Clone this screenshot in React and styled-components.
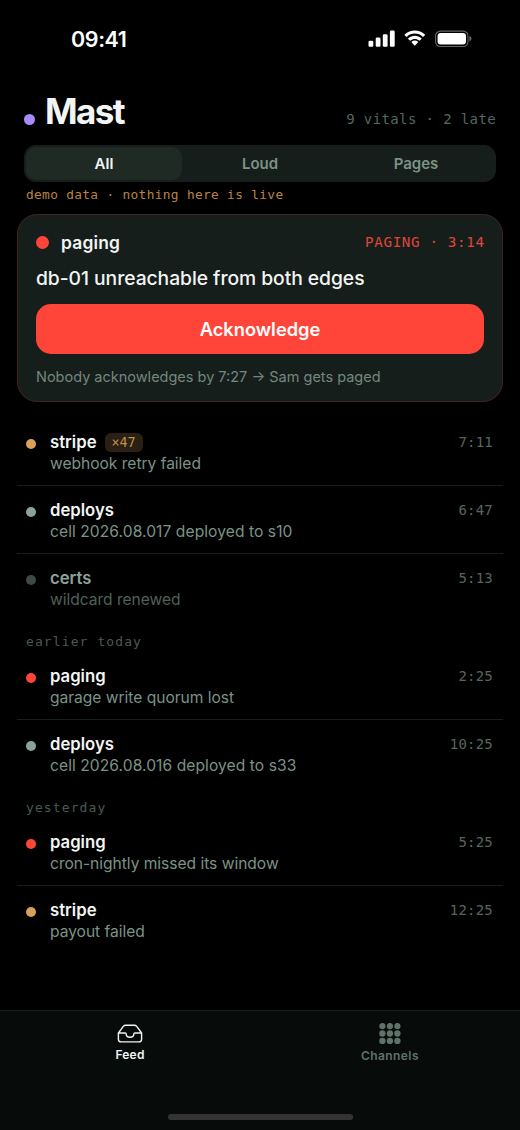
import React, { useState } from "react";
import styled, { createGlobalStyle } from "styled-components";

const tabs = ["All", "Loud", "Pages"];

const sections = [
  {
    rows: [
      { name: "stripe", text: "webhook retry failed", time: "7:11", color: "#d9a05b", count: 47 },
      { name: "deploys", text: "cell 2026.08.017 deployed to s10", time: "6:47", color: "#8aa398", spacing: 0.07 },
      { name: "certs", text: "wildcard renewed", time: "5:13", color: "#3d4b45", quiet: true },
    ],
  },
  {
    label: "earlier today",
    rows: [
      { name: "paging", text: "garage write quorum lost", time: "2:25", color: "#ff453a" },
      { name: "deploys", text: "cell 2026.08.016 deployed to s33", time: "10:25", color: "#8aa398", spacing: 0.07 },
    ],
  },
  {
    label: "yesterday",
    rows: [
      { name: "paging", text: "cron-nightly missed its window", time: "5:25", color: "#ff453a" },
      { name: "stripe", text: "payout failed", time: "12:25", color: "#d9a05b" },
    ],
  },
];

const App = () => {
  const [tab, setTab] = useState("All");

  return (
    <>
      <GlobalStyle />
      <Screen>
        <StatusBar>
          <Clock>09:41</Clock>
          <StatusIcons />
        </StatusBar>
        <Header>
          <BrandDot />
          <h1>Mast</h1>
          <Vitals>9 vitals · 2 late</Vitals>
        </Header>
        <Segments>
          {tabs.map((item) => (
            <Segment key={item} $active={item === tab} onClick={() => setTab(item)}>
              {item}
            </Segment>
          ))}
        </Segments>
        <Demo>demo data · nothing here is live</Demo>
        <Card>
          <CardTop>
            <CardDot />
            <CardName>paging</CardName>
            <CardState>PAGING · 3:14</CardState>
          </CardTop>
          <CardTitle>db-01 unreachable from both edges</CardTitle>
          <AckButton>Acknowledge</AckButton>
          <CardNote>Nobody acknowledges by 7:27 → Sam gets paged</CardNote>
        </Card>
        <Feed>
          {sections.map((section, index) => (
            <section key={index}>
              {section.label && <SectionLabel>{section.label}</SectionLabel>}
              {section.rows.map((row) => (
                <Row key={row.name}>
                  <RowDot $color={row.color} />
                  <RowBody>
                    <RowName $quiet={row.quiet}>
                      <span>{row.name}</span>
                      {row.count && <Count>×{row.count}</Count>}
                    </RowName>
                    <RowText $quiet={row.quiet} $spacing={row.spacing}>
                      {row.text}
                    </RowText>
                  </RowBody>
                  <RowTime>{row.time}</RowTime>
                </Row>
              ))}
            </section>
          ))}
        </Feed>
        <TabBar>
          <Tabs>
            <Tab $active>
              <TrayIcon />
              <span>Feed</span>
            </Tab>
            <Tab>
              <GridIcon />
              <span>Channels</span>
            </Tab>
          </Tabs>
          <HomeIndicator />
        </TabBar>
      </Screen>
    </>
  );
};

const StatusIcons = () => (
  <svg width="104" height="18" viewBox="0 0 104 18" fill="#fff">
    <rect x="0.5" y="10.8" width="4.8" height="6" rx="1.3" />
    <rect x="7.7" y="7.6" width="4.8" height="9.2" rx="1.3" />
    <rect x="14.8" y="4.2" width="4.8" height="12.6" rx="1.3" />
    <rect x="21.9" y="0.6" width="4.8" height="16.2" rx="1.3" />
    <path d="M46.8 3.6c3 0 5.8 1.2 7.9 3.2.2.2.4.2.6 0l1.6-1.6c.2-.2.2-.5 0-.7-5.6-5.3-14.6-5.3-20.2 0-.2.2-.2.5 0 .7l1.6 1.6c.2.2.4.2.6 0 2.1-2 4.9-3.2 7.9-3.2z" />
    <path d="M46.8 8.9c1.7 0 3.2.6 4.4 1.7.2.2.4.2.6 0l1.6-1.6c.2-.2.2-.5 0-.7-3.7-3.5-9.5-3.5-13.2 0-.2.2-.2.5 0 .7l1.6 1.6c.2.2.4.2.6 0 1.2-1.1 2.8-1.7 4.4-1.7z" />
    <path d="M49.9 12.5c.2-.2.2-.5 0-.7-1.8-1.6-4.4-1.6-6.2 0-.2.2-.2.5 0 .7l2.8 2.9c.2.2.5.2.6 0z" />
    <rect x="67.6" y="1.1" width="32.4" height="15.4" rx="4.8" fill="none" stroke="#fff" strokeOpacity="0.4" strokeWidth="1.1" />
    <rect x="69.6" y="3.1" width="28.4" height="11.4" rx="3.2" />
    <path d="M101.5 6.1v5.4c1.1-.5 1.9-1.5 1.9-2.7s-.8-2.2-1.9-2.7z" fillOpacity="0.45" />
  </svg>
);

const TrayIcon = () => (
  <svg width="26" height="22" viewBox="0 0 26 22" fill="none" stroke="currentColor" strokeWidth="1.4" strokeLinejoin="round" strokeLinecap="round">
    <path d="M1.4 10 6.3 3.4c.7-.9 1.2-1.2 2.3-1.2h8.8c1.1 0 1.6.3 2.3 1.2l4.9 6.6v6.2c0 1.9-.8 2.7-2.7 2.7H4.1c-1.9 0-2.7-.8-2.7-2.7z" />
    <path d="M1.6 10h6.5c.7 0 1.1.4 1.1 1 0 1.8 1.7 3.2 3.8 3.2s3.8-1.4 3.8-3.2c0-.6.4-1 1.1-1h6.5" />
  </svg>
);

const GridIcon = () => (
  <svg width="22" height="22" viewBox="0 0 22 22" fill="currentColor">
    {[3.1, 10.5, 17.9].map((y) =>
      [3.4, 10.9, 18.4].map((x) => <circle key={`${x}-${y}`} cx={x} cy={y} r="3.15" />)
    )}
  </svg>
);

const GlobalStyle = createGlobalStyle`
  * {
    box-sizing: border-box;
  }
  body {
    margin: 0;
    background: #000;
    font-family: Inter, "Liberation Sans", sans-serif;
  }
  button {
    border: none;
    padding: 0;
    font-family: inherit;
    cursor: pointer;
  }
  h1, h2, p {
    margin: 0;
  }
`;

const Mono = styled.span`
  font-family: "DejaVu Sans Mono", monospace;
  white-space: pre;
`;

const Dot = styled.i`
  flex: none;
  border-radius: 50%;
`;

const Screen = styled.div`
  display: flex;
  flex-direction: column;
  width: 520px;
  height: 1130px;
  overflow: hidden;
  background: #000;
  color: #f2f5f3;
`;

const StatusBar = styled.div`
  display: flex;
  justify-content: space-between;
  align-items: center;
  height: 78px;
  padding: 0 48px 0 71px;
  color: #fff;
`;

const Clock = styled.span`
  font-size: 21.5px;
  font-weight: 600;
  letter-spacing: -0.4px;
`;

const Header = styled.header`
  display: flex;
  align-items: baseline;
  height: 67px;
  padding: 11px 24px 0;
  h1 {
    margin-left: 10px;
    font-size: 35px;
    line-height: 44px;
    font-weight: 700;
    letter-spacing: -1.6px;
  }
`;

const BrandDot = styled(Dot)`
  width: 11px;
  height: 11px;
  background: #a78bfa;
  transform: translateY(1px);
`;

const Vitals = styled(Mono)`
  margin-left: auto;
  font-size: 14px;
  letter-spacing: 0.38px;
  color: #55675f;
`;

const Segments = styled.div`
  display: grid;
  grid-template-columns: repeat(3, 1fr);
  height: 37px;
  margin: 0 24px;
  padding: 2px;
  border-radius: 12px;
  background: #161e1b;
`;

const Segment = styled.button`
  border-radius: 10px;
  background: ${({ $active }) => ($active ? "#1f2a25" : "transparent")};
  color: ${({ $active }) => ($active ? "#f2f5f3" : "#7b9287")};
  font-size: 15px;
  font-weight: 600;
`;

const Demo = styled(Mono)`
  height: 32px;
  padding: 4px 26px 0;
  font-size: 12.8px;
  letter-spacing: 0.34px;
  line-height: 18px;
  color: #b98443;
`;

const Card = styled.div`
  display: flex;
  flex-direction: column;
  height: 188px;
  margin: 0 17px;
  padding: 15px 18px 0;
  border: 1px solid #42231f;
  border-radius: 20px;
  background: #161e1b;
`;

const CardTop = styled.div`
  display: flex;
  align-items: center;
  height: 24px;
`;

const CardDot = styled(Dot)`
  width: 13px;
  height: 13px;
  background: #ff453a;
`;

const CardName = styled.span`
  margin-left: 12px;
  font-size: 17.4px;
  font-weight: 600;
  letter-spacing: 0.2px;
`;

const CardState = styled(Mono)`
  margin-left: auto;
  font-size: 14.2px;
  letter-spacing: 0.65px;
  margin-right: -0.6px;
  color: #e0443a;
`;

const CardTitle = styled.h2`
  margin-top: 11px;
  font-size: 19.3px;
  line-height: 26px;
  font-weight: 500;
  letter-spacing: -0.05px;
`;

const AckButton = styled.button`
  height: 50px;
  margin-top: 13px;
  padding-bottom: 1px;
  border-radius: 15px;
  background: #ff453a;
  color: #fff;
  font-size: 18.3px;
  font-weight: 600;
`;

const CardNote = styled.p`
  margin-top: 13px;
  font-size: 14.5px;
  line-height: 20px;
  color: #72877d;
`;

const Feed = styled.main`
  flex: 1;
  padding: 16px 17px 0;
`;

const SectionLabel = styled(Mono)`
  display: block;
  height: 30px;
  padding: 10px 9px 0;
  font-size: 13px;
  line-height: 20px;
  letter-spacing: 1.1px;
  color: #4a5a53;
`;

const Row = styled.div`
  display: flex;
  height: 68px;
  padding: 13px 10px 0 9px;
  &:not(:last-child) {
    border-bottom: 1px solid #161e1b;
  }
`;

const RowDot = styled(Dot)`
  width: 10px;
  height: 10px;
  margin-top: 8px;
  background: ${({ $color }) => $color};
`;

const RowBody = styled.div`
  flex: 1;
  margin-left: 14px;
`;

const RowName = styled.div`
  display: flex;
  align-items: center;
  gap: 8px;
  height: 22px;
  font-size: 16.7px;
  font-weight: 600;
  color: ${({ $quiet }) => ($quiet ? "#8aa398" : "#f2f5f3")};
`;

const Count = styled(Mono)`
  height: 19px;
  padding: 0 7px;
  border-radius: 6px;
  background: #2b2014;
  color: #c08e50;
  font-size: 13.4px;
  font-weight: 400;
  line-height: 19px;
`;

const RowText = styled.p`
  font-size: 15.6px;
  line-height: 21px;
  letter-spacing: ${({ $spacing }) => $spacing || -0.03}px;
  color: ${({ $quiet }) => ($quiet ? "#4f6159" : "#7b9287")};
`;

const RowTime = styled(Mono)`
  font-size: 14px;
  letter-spacing: 0.2px;
  line-height: 23px;
  color: #55675f;
`;

const TabBar = styled.nav`
  display: flex;
  flex-direction: column;
  justify-content: space-between;
  align-items: center;
  height: 120px;
  padding-bottom: 10px;
  border-top: 1px solid #16201c;
  background: #070b0a;
`;

const Tabs = styled.div`
  display: grid;
  grid-template-columns: 1fr 1fr;
  width: 100%;
  padding-top: 12px;
`;

const Tab = styled.div`
  display: flex;
  flex-direction: column;
  align-items: center;
  gap: ${({ $active }) => ($active ? 2 : 3)}px;
  color: ${({ $active }) => ($active ? "#f2f5f3" : "#5f736a")};
  font-size: 12px;
  font-weight: 600;
  line-height: 16px;
  letter-spacing: ${({ $active }) => ($active ? 0.2 : 0.4)}px;
`;

const HomeIndicator = styled.div`
  width: 185px;
  height: 6px;
  border-radius: 3px;
  background: #343434;
`;

export default App;
